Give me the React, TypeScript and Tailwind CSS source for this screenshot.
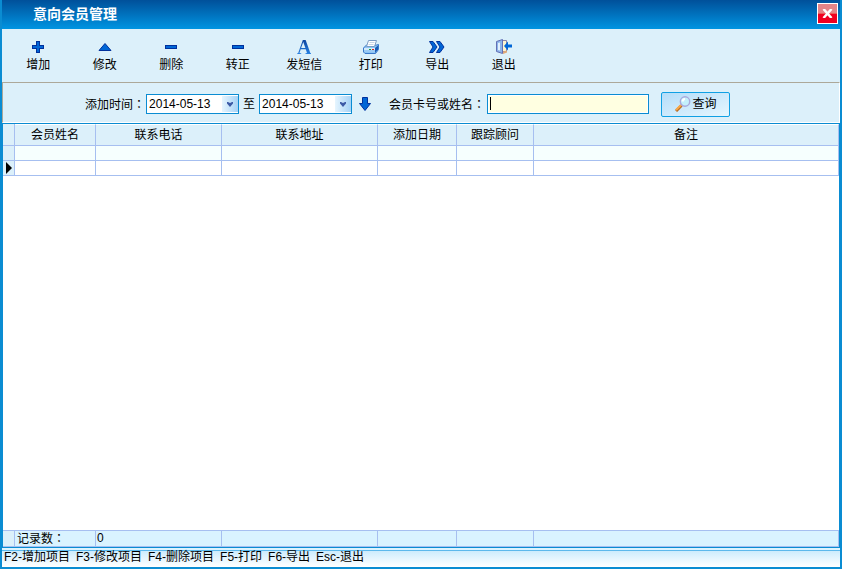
import { useState } from "react";
import type { ReactNode } from "react";

const toolbarItems: { label: string; icon: ReactNode }[] = [
	{ label: "增加", icon: <PlusIcon /> },
	{ label: "修改", icon: <TriangleIcon /> },
	{ label: "删除", icon: <MinusIcon /> },
	{ label: "转正", icon: <MinusIcon /> },
	{ label: "发短信", icon: <LetterIcon /> },
	{ label: "打印", icon: <PrinterIcon /> },
	{ label: "导出", icon: <ExportIcon /> },
	{ label: "退出", icon: <ExitIcon /> },
];

const columns = ["会员姓名", "联系电话", "联系地址", "添加日期", "跟踪顾问", "备注"];

const shortcuts = [
	"F2-增加项目",
	"F3-修改项目",
	"F4-删除项目",
	"F5-打印",
	"F6-导出",
	"Esc-退出",
];

function PlusIcon() {
	return (
		<svg width="16" height="16" viewBox="0 0 16 16" shapeRendering="crispEdges">
			<path d="M6 2h4v4h4v4h-4v4H6v-4H2V6h4z" fill="#00309c" />
			<path d="M7 3h2v4h4v2H9v4H7V9H3V7h4z" fill="#0066d6" />
		</svg>
	);
}

function TriangleIcon() {
	return (
		<svg width="16" height="16" viewBox="0 0 16 16">
			<path d="M8 4.5L14 11.5H2z" fill="#0066d6" stroke="#00309c" />
		</svg>
	);
}

function MinusIcon() {
	return (
		<svg width="16" height="16" viewBox="0 0 16 16" shapeRendering="crispEdges">
			<path d="M2 6h12v4H2z" fill="#00309c" />
			<path d="M3 7h10v2H3z" fill="#0066d6" />
		</svg>
	);
}

function LetterIcon() {
	return (
		<span
			aria-hidden="true"
			className="h-4 leading-4 text-[20px] font-bold font-['Liberation_Serif',serif] bg-linear-to-b from-[#0a3f9a] to-[#2b86e8] bg-clip-text text-transparent">
			A
		</span>
	);
}

function PrinterIcon() {
	return (
		<svg width="18" height="16" viewBox="0 0 18 16">
			<path d="M1.5 9L4.5 6h10l2-.5v5l-3 4H3L1.5 13z" fill="#8cc4f4" stroke="#3a78c8" />
			<path d="M13 9l3-2.5v4L13 14z" fill="#1c5cb4" />
			<path d="M6.5 1.5h8l-2 6h-8z" fill="#fff" stroke="#7b9cc4" />
			<path d="M7.5 3.5h5M6.5 5.5h5" stroke="#c9d6e6" />
			<path d="M2 9h11v2H2z" fill="#d4ebfc" />
			<path d="M2 11h11v2H2z" fill="#9ccbf4" />
			<path d="M7 10h2v1H7z" fill="#13a538" />
			<path d="M10 10h2v1h-2z" fill="#e02020" />
		</svg>
	);
}

function ExportIcon() {
	return (
		<svg width="18" height="16" viewBox="0 0 18 16">
			<path
				d="M1.5 2.500H5l4 5.500-4 5.500H1.500L5 8zM8.500 2.500H12l4 5.500-4 5.500H8.500L12 8z"
				fill="#0066d6"
				stroke="#00309c"
			/>
		</svg>
	);
}

function ExitIcon() {
	return (
		<svg width="18" height="16" viewBox="0 0 18 16">
			<path d="M6 1.5h5.5v11H6z" fill="#fdf5d0" stroke="#8b83a8" />
			<path d="M1.5 2.5L7.5.5v14l-6-2z" fill="#8cb4ea" stroke="#6470b4" />
			<path d="M3 4l2-.5v8L3 11z" fill="#e2f0fd" />
			<path d="M8 12.500l4-1v2L8 15z" fill="#dfa878" />
			<path d="M9 7l4-4.500V5.500h4v3h-4v3z" fill="#0066d6" />
		</svg>
	);
}

function DownIcon() {
	return (
		<svg width="12" height="14" viewBox="0 0 12 14">
			<path d="M3.5.5h5v6h3L6 13.500.5 6.500h3z" fill="#0066d6" stroke="#00309c" />
		</svg>
	);
}

function SearchIcon() {
	return (
		<svg width="16" height="16" viewBox="0 0 16 16">
			<path d="M1 15L6.500 9.500" stroke="#b86a20" strokeWidth="3" />
			<path d="M1 14L6 9" stroke="#f8a848" strokeWidth="2" />
			<circle cx="10" cy="5.500" r="4.700" fill="#c4f0fc" stroke="#a8a8dc" strokeWidth="1.400" />
			<path d="M7.500 5.500q.5-2.500 2.500-2.500" stroke="#fff" strokeWidth="2" fill="none" />
		</svg>
	);
}

// The full-width colon sits in the middle of its cell
function Colon() {
	return <span className="font-['Noto_Sans_CJK_TC',sans-serif]">：</span>;
}

function DateSelect({ label, value }: { label: string; value: string }) {
	return (
		<div className="relative w-[93px] h-5">
			<select
				aria-label={label}
				defaultValue={value}
				className="appearance-none w-full h-full bg-white border border-[#0a8cd2] pl-[2px] outline-none">
				<option>{value}</option>
			</select>
			<span className="absolute right-px top-[2px] w-4 h-4 bg-linear-to-r from-[#e6f5fe] to-[#a4d2f6] flex items-center justify-center pointer-events-none">
				<svg width="8" height="5" viewBox="0 0 8 5">
					<path d="M1 0h1l2 1 2-1h1v1.500L4 5 1 1.500z" fill="#3c5aa6" />
				</svg>
			</span>
		</div>
	);
}

function GridColumns() {
	return (
		<colgroup>
			<col className="w-3" />
			<col className="w-[81px]" />
			<col className="w-[126px]" />
			<col className="w-[156px]" />
			<col className="w-[79px]" />
			<col className="w-[77px]" />
			<col />
		</colgroup>
	);
}

function Toolbar() {
	return (
		<div className="bg-[#dcf0fa] h-[53px] pl-[3px] pt-[10px]">
			<div className="grid grid-cols-8 w-[532px]">
				{toolbarItems.map((item) => (
					<button key={item.label} className="flex flex-col items-center cursor-pointer">
						{item.icon}
						<span className="leading-5">{item.label}</span>
					</button>
				))}
			</div>
		</div>
	);
}

function FilterBar() {
	const [keyword, setKeyword] = useState<string>("");

	return (
		<form
			onSubmit={(e) => e.preventDefault()}
			className="bg-[#dcf0fa] h-[41px] border border-t-[#aca899] border-l-[#aca899] border-r-white border-b-white flex items-center pt-[3px] pl-[82px] whitespace-nowrap">
			<span>
				添加时间
				<Colon />
			</span>
			<div className="flex items-center gap-1 ml-px">
				<DateSelect label="开始日期" value="2014-05-13" />
				<span>至</span>
				<DateSelect label="结束日期" value="2014-05-13" />
			</div>
			<button type="button" aria-label="下移" className="ml-[7px] cursor-pointer">
				<DownIcon />
			</button>
			<label htmlFor="keyword" className="ml-[18px]">
				会员卡号或姓名
				<Colon />
			</label>
			<div className="relative ml-[2px] w-[162px] h-5">
				<input
					id="keyword"
					type="text"
					value={keyword}
					onChange={(e) => setKeyword(e.target.value)}
					className="peer block w-full h-full bg-[#ffffe1] border border-[#0a8cd2] ring-1 ring-inset ring-white px-[2px] outline-none"
				/>
				{keyword === "" && (
					<span className="absolute left-[3px] top-[3px] w-px h-[13px] bg-black pointer-events-none peer-focus:hidden" />
				)}
			</div>
			<button
				type="submit"
				className="ml-3 w-[69px] h-[25px] flex items-center justify-center gap-[2px] border border-[#10a0e4] rounded-[2px] bg-linear-to-br from-[#b4ddf9] to-[#e6f6fe] cursor-pointer">
				<SearchIcon />
				查询
			</button>
		</form>
	);
}

function MemberGrid() {
	return (
		<div className="flex-1 flex flex-col justify-between bg-white border border-[#0a8cd2]">
			<table className="w-full table-fixed border-separate border-spacing-0">
				<GridColumns />
				<thead>
					<tr className="h-[22px] bg-[#dcf0fa]">
						<th className="p-0 border-r border-b border-[#a6bff0]" />
						{columns.map((name) => (
							<th
								key={name}
								className="p-0 font-normal leading-5 border-r border-b border-[#a6bff0] border-t border-t-white">
								{name}
							</th>
						))}
					</tr>
				</thead>
				<tbody>
					{[0, 1].map((row) => (
						<tr key={row} className="h-[15px] even:bg-white odd:bg-[#f6fffe]">
							<td className="p-0 bg-[#dcf0fa] border-r border-b border-[#a6bff0]">
								{row === 1 && (
									<svg width="7" height="12" viewBox="0 0 7 12" className="block ml-[3px]">
										<path d="M0 0l6 6-6 6z" fill="#000" />
									</svg>
								)}
							</td>
							{columns.map((name) => (
								<td key={name} className="p-0 border-r border-b border-[#a6bff0]" />
							))}
						</tr>
					))}
				</tbody>
			</table>
			<table className="w-full table-fixed border-separate border-spacing-0">
				<GridColumns />
				<tbody>
					<tr className="h-4 bg-[#d9f3ff] leading-[13px]">
						<td className="p-0 bg-[#dcf0fa] border-r border-y border-[#a6bff0]" />
						<td className="p-0 pl-[2px] border-r border-y border-[#a6bff0]">
							记录数
							<Colon />
						</td>
						<td className="p-0 pl-px border-r border-y border-[#a6bff0]">0</td>
						{columns.slice(2).map((name) => (
							<td key={name} className="p-0 border-r border-y border-[#a6bff0]" />
						))}
					</tr>
				</tbody>
			</table>
		</div>
	);
}

export default function App() {
	return (
		<div className="min-h-screen flex flex-col bg-[#0a8cd2] px-[2px] pb-[2px] text-black text-[12px] font-['Liberation_Sans','Noto_Sans_CJK_SC',sans-serif]">
			<header className="h-[29px] flex items-center justify-between pl-[31px] pr-[2px] bg-linear-to-b from-[#00509a] to-[#0095e2]">
				<h1 className="text-white text-[14px] font-bold">意向会员管理</h1>
				<button
					aria-label="关闭"
					className="w-[21px] h-[21px] mb-[3px] border border-white bg-linear-to-b from-[#e48488] from-45% to-[#f00020] to-55% flex items-center justify-center cursor-pointer">
					<svg width="11" height="9" viewBox="0 0 11 9">
						<path d="M1.5 0L9.500 9M9.500 0L1.500 9" stroke="#fff" strokeWidth="2.500" />
					</svg>
				</button>
			</header>
			<Toolbar />
			<FilterBar />
			<MemberGrid />
			<footer className="h-[19px] bg-[#dcf4ff] pt-[2px]">
				<div className="h-[17px] border-t border-[#5cb8ec] bg-linear-to-b from-[#cdecfd] to-white flex gap-[6px] pl-[2px] leading-[13px]">
					{shortcuts.map((text) => (
						<span key={text}>{text}</span>
					))}
				</div>
			</footer>
		</div>
	);
}
